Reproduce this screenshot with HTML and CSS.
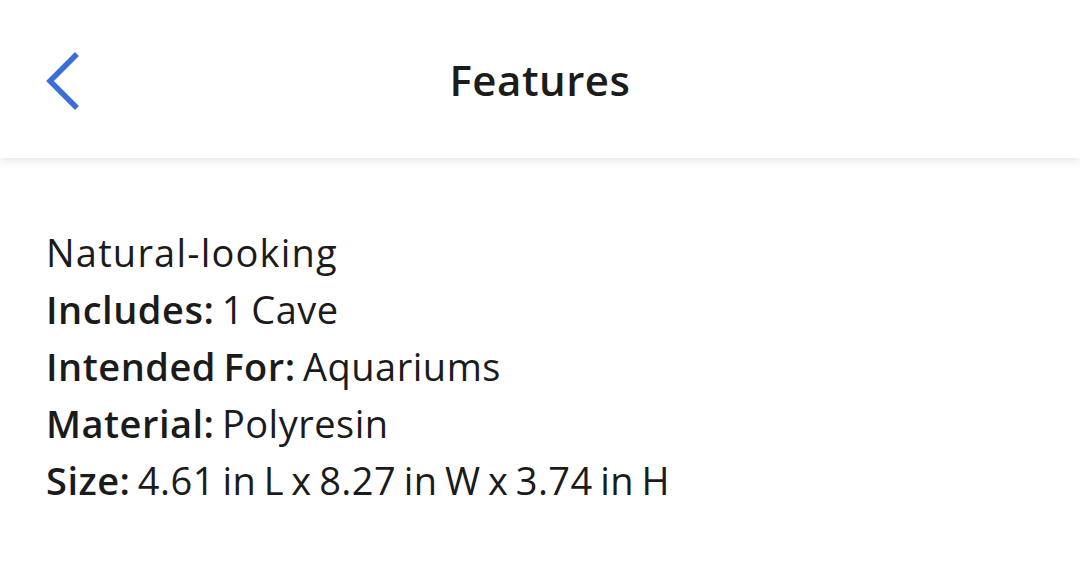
FILE: index.html
```html
<!DOCTYPE html>
<html lang="en">
<head>
  <meta charset="UTF-8" />
  <meta name="viewport" content="width=device-width, initial-scale=1.0" />
  <title>Features</title>
  <link rel="stylesheet" href="styles.css">
</head>
<body>
  <header class="top-bar">
    <button class="back-btn" aria-label="Back">
      <svg width="40" height="60" viewBox="0 0 40 60">
        <polyline points="32,5 7,30 32,55" fill="none" stroke="#3b6fd8" stroke-width="5.5" stroke-linecap="square" />
      </svg>
    </button>
    <h1 class="top-bar-title">Features</h1>
  </header>

  <main class="features">
    <p>Natural-looking</p>
    <p><strong>Includes:</strong> 1 Cave</p>
    <p><strong>Intended For:</strong> Aquariums</p>
    <p><strong>Material:</strong> Polyresin</p>
    <p><strong>Size:</strong> 4.61 in L x 8.27 in W x 3.74 in H</p>
  </main>
</body>
</html>
```

FILE: styles.css
```css
body {
  font-family: 'Open Sans', 'Noto Sans', sans-serif;
  margin: 0;
  background-color: #fff;
  color: #1b1b1b;
}

.top-bar {
  position: relative;
  height: 158px;
  display: flex;
  align-items: center;
  justify-content: center;
  background-color: #fff;
  box-shadow: 0 2px 10px rgba(0, 0, 0, 0.12);
}

.back-btn {
  position: absolute;
  left: 43px;
  top: 51px;
  padding: 0;
  border: none;
  background: none;
  display: flex;
}

.top-bar-title {
  margin: 0;
  font-size: 42px;
  font-weight: 600;
  letter-spacing: 0.5px;
  color: #1c1c1c;
}

.features {
  padding: 224px 46px 0;
  margin-top: -158px;
}

.features p {
  margin: 0;
  font-size: 38px;
  line-height: 57px;
  letter-spacing: 0.5px;
  word-spacing: -3px;
}

.features p:first-child {
  letter-spacing: 1.2px;
}

.features strong {
  font-weight: 600;
}
```
